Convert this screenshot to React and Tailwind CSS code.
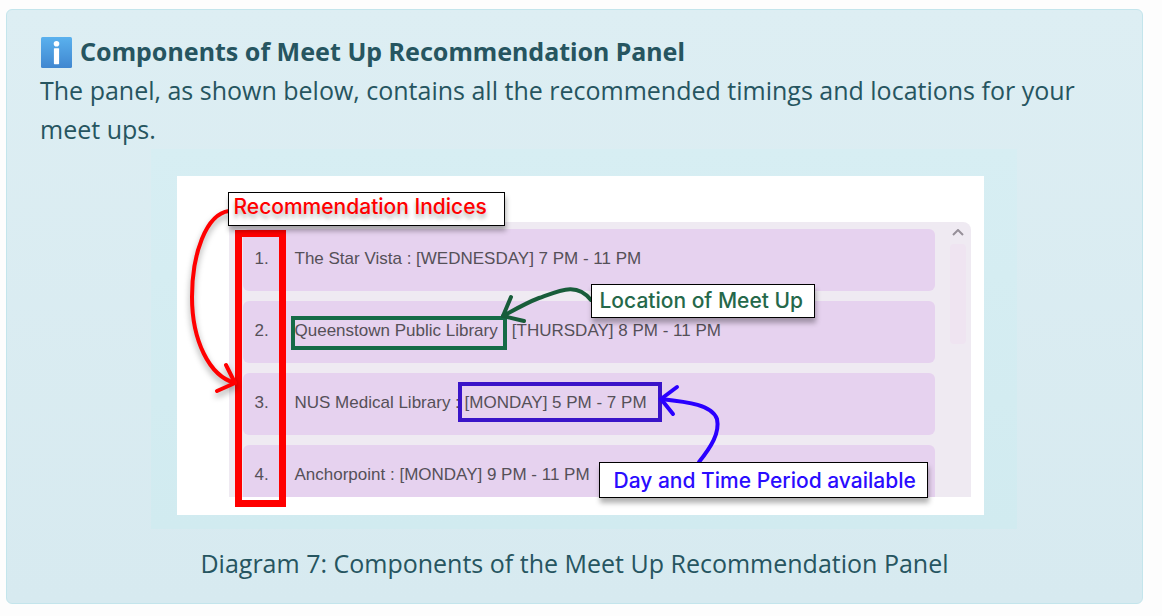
const recommendations = [
  { place: "The Star Vista :", slot: "[WEDNESDAY] 7 PM - 11 PM" },
  { place: "Queenstown Public Library :", slot: "[THURSDAY] 8 PM - 11 PM" },
  { place: "NUS Medical Library :", slot: "[MONDAY] 5 PM - 7 PM" },
  { place: "Anchorpoint :", slot: "[MONDAY] 9 PM - 11 PM" },
];

function InfoIcon() {
  return (
    <svg className="mt-1 h-8 w-8 shrink-0" viewBox="0 0 32 32" role="img" aria-label="Information">
      <defs>
        <linearGradient id="info-fill" x1="0" y1="0" x2="0" y2="1">
          <stop offset="0" stopColor="#5ab1ee" />
          <stop offset="1" stopColor="#4087d0" />
        </linearGradient>
      </defs>
      <rect x="1" y="1" width="31" height="31" rx="1.5" fill="url(#info-fill)" />
      <circle cx="16.5" cy="7.7" r="2.8" fill="#fff" />
      <rect x="13.9" y="12.2" width="5.2" height="16" rx="0.6" fill="#fff" />
    </svg>
  );
}

function Arrows() {
  return (
    <svg
      className="absolute left-0 top-0"
      width="807"
      height="339"
      viewBox="0 0 807 339"
      fill="none"
      strokeWidth="4"
      strokeLinecap="round"
      strokeLinejoin="round"
      aria-hidden="true"
    >
      <g stroke="#ff0000" className="drop-shadow-[0_4px_3px_rgba(0,0,0,0.35)]">
        <path d="M52 35C29 38 15 78 15 121C15 164 32 200 58 207" />
        <path d="M49 189L58 207L40 215" />
      </g>
      <g stroke="#185c3a">
        <path d="M414 124C400 106 384 114 362 122C349 127 337 134 326 140" />
        <path d="M334 121L326 140L347 145" />
      </g>
      <g stroke="#2a00ff">
        <path d="M522 286C534 271 543 257 540 243C535 229 512 226 484 223" />
        <path d="M500 211L484 223L496 238" />
      </g>
    </svg>
  );
}

function Diagram() {
  return (
    <div className="relative w-[807px] shrink-0 bg-white pb-[18px] pl-[52px] pr-[13px] pt-[46px] font-['Inter',sans-serif]">
      <div className="flex h-[275px] overflow-hidden rounded-tr-lg bg-[#efeaf2] pl-[14px] pt-[7px]">
        <ol className="flex grow flex-col gap-[10px]">
          {recommendations.map((item, index) => (
            <li
              key={item.place}
              className="flex h-[62px] shrink-0 items-center rounded-md bg-[#e6d2ef] pb-1 pl-3 font-['Liberation_Sans',sans-serif] text-[17px] text-[#555058]"
            >
              <span className="w-10 shrink-0">{index + 1}.</span>
              <span className="whitespace-pre">
                {item.place} {item.slot}
              </span>
            </li>
          ))}
        </ol>
        <div className="flex w-9 shrink-0 flex-col items-center pl-[10px]">
          <svg className="h-[7px] w-3" viewBox="0 0 12 7" fill="none" stroke="#969099" strokeWidth="2" aria-hidden="true">
            <path d="M1 6L6 1L11 6" />
          </svg>
          <div className="mt-2 h-[100px] w-4 rounded bg-[#efe4f1]" />
        </div>
      </div>

      <div className="absolute left-[58px] top-[54px] h-[277px] w-[51px] border-[7px] border-[#ff0000]" />
      <div className="absolute left-[114px] top-[140px] h-[34px] w-[216px] border-4 border-[#156b47]" />
      <div className="absolute left-[281px] top-[206px] h-[40px] w-[204px] border-4 border-[#3a14c8]" />
      <Arrows />
      <div className="absolute left-[51px] top-[16px] h-[34px] w-[277px] whitespace-nowrap border border-black bg-white pl-[5px] text-[21px] font-medium leading-[28px] text-[#ff0000] shadow-[1px_5px_5px_rgba(0,0,0,0.3)] [text-shadow:0_4px_4px_rgba(0,0,0,0.3)]">
        Recommendation Indices
      </div>
      <div className="absolute left-[414px] top-[108px] h-[34px] w-[224px] whitespace-nowrap border border-black bg-white pl-2 text-[21px] font-medium leading-[32px] text-[#25684a] shadow-[1px_5px_5px_rgba(0,0,0,0.3)]">
        Location of Meet Up
      </div>
      <div className="absolute left-[422px] top-[286px] h-[36px] w-[329px] whitespace-nowrap border border-black bg-white pl-[14px] text-[21px] font-medium leading-[36px] text-[#2a0cff] shadow-[1px_5px_5px_rgba(0,0,0,0.3)]">
        Day and Time Period available
      </div>
    </div>
  );
}

export default function App() {
  return (
    <main className="min-h-screen bg-[#fdfdfd] pb-3 pl-[6px] pr-[19px] pt-[9px]">
      <section className="rounded-md border border-[#c3e5ec] bg-linear-to-b from-[#ddeef3] to-[#d7eaf0] px-[33px] pb-[20px] pt-[22px] font-['Open_Sans','Noto_Sans',sans-serif] text-[25px] leading-[39px] text-[#265560]">
        <h1 className="flex gap-2 font-['Noto_Sans',sans-serif] font-bold">
          <InfoIcon />
          Components of Meet Up Recommendation Panel
        </h1>
        <p>The panel, as shown below, contains all the recommended timings and locations for your meet ups.</p>
        <figure className="flex flex-col items-center">
          <div className="ml-[18px] flex w-[866px] bg-linear-to-b from-[#d7eef3] to-[#d1ebf0] pb-[14px] pl-[26px] pt-[27px]">
            <Diagram />
          </div>
          <figcaption className="mt-[15px] text-center">
            Diagram 7: Components of the Meet Up Recommendation Panel
          </figcaption>
        </figure>
      </section>
    </main>
  );
}
